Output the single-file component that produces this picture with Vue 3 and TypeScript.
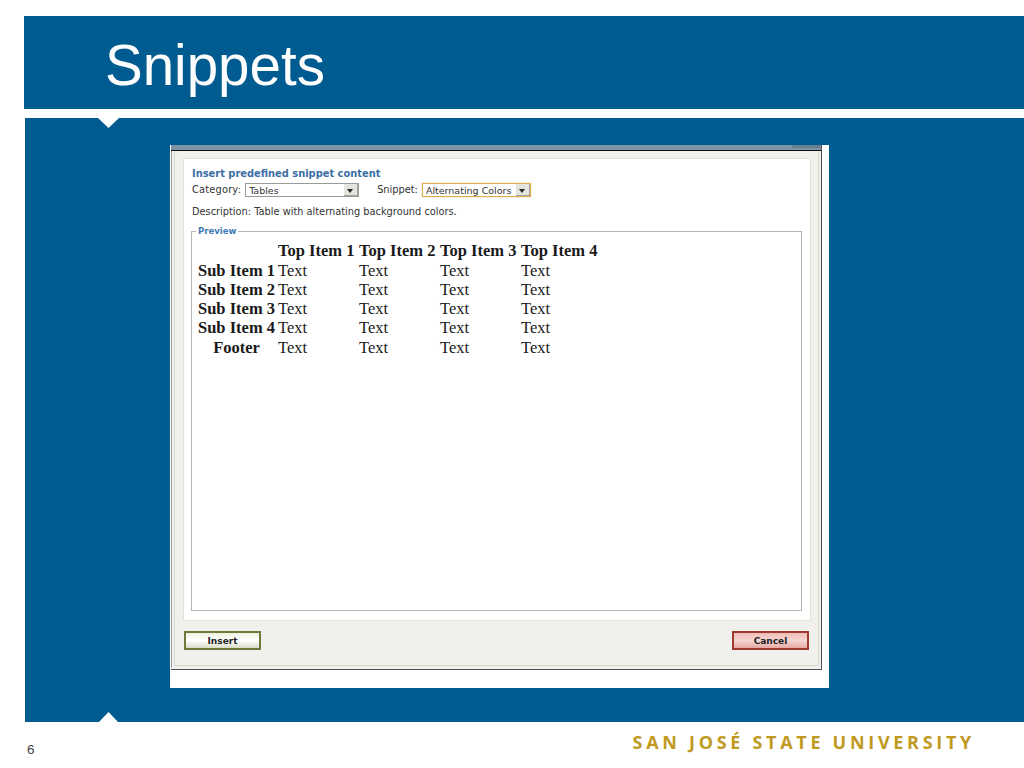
<script setup lang="ts">
const heads: string[] = ['Top Item 1', 'Top Item 2', 'Top Item 3', 'Top Item 4']
const rows: { label: string; foot?: boolean }[] = [
  { label: 'Sub Item 1' },
  { label: 'Sub Item 2' },
  { label: 'Sub Item 3' },
  { label: 'Sub Item 4' },
  { label: 'Footer', foot: true },
]
</script>

<template>
  <div class="page">
    <header class="title-bar"><h1>Snippets</h1></header>
    <main class="content">
      <span class="notch notch-top"></span>
      <div class="shot">
        <div class="dialog">
          <div class="dialog-strip"><span class="strip-tab"></span></div>
          <div class="dialog-body">
            <div class="panel">
              <div class="heading">Insert predefined snippet content</div>
              <div class="fields">
                <span class="lbl">Category:</span>
                <div class="select cat"><span>Tables</span><i class="arrow"></i></div>
                <span class="lbl snip">Snippet:</span>
                <div class="select focus"><span>Alternating Colors</span><i class="arrow"></i></div>
              </div>
              <div class="desc">Description: Table with alternating background colors.</div>
              <div class="preview">
                <span class="legend">Preview</span>
                <div class="table">
                  <div class="row head">
                    <div class="side"></div>
                    <div v-for="h in heads" :key="h" class="cell">{{ h }}</div>
                  </div>
                  <div v-for="r in rows" :key="r.label" class="row" :class="{ foot: r.foot }">
                    <div class="side">{{ r.label }}</div>
                    <div v-for="h in heads" :key="h" class="cell">Text</div>
                  </div>
                </div>
              </div>
            </div>
            <div class="actions">
              <button class="btn ok">Insert</button>
              <button class="btn cancel">Cancel</button>
            </div>
          </div>
        </div>
      </div>
      <span class="notch notch-bottom"></span>
    </main>
    <footer class="foot-bar">
      <span class="num">6</span>
      <span class="brand">SAN JOSÉ STATE UNIVERSITY</span>
    </footer>
  </div>
</template>

<style>
html, body { margin: 0; background: #fff; }
</style>

<style scoped>
.page {
  width: 1024px;
  height: 768px;
  overflow: hidden;
  background: #fff;
  padding-top: 16px;
  box-sizing: border-box;
  font-family: "Liberation Sans", Arial, sans-serif;
}
.title-bar {
  height: 93px;
  margin-left: 24px;
  background: #005c90;
  padding-left: 81px;
  box-sizing: border-box;
}
.title-bar h1 {
  margin: 0;
  padding-top: 18px;
  font-size: 56.5px;
  line-height: 64px;
  font-weight: 400;
  color: #fff;
}
.content {
  position: relative;
  height: 604px;
  margin: 9px 0 0 25px;
  background: #005c90;
  padding: 27px 0 0 145px;
  box-sizing: border-box;
}
.notch { position: absolute; background: #fff; }
.notch-top { top: 0; left: 73px; width: 21px; height: 10px; clip-path: polygon(0 0, 100% 0, 50% 100%); }
.notch-bottom { bottom: 0; left: 74px; width: 19px; height: 10px; clip-path: polygon(50% 0, 100% 100%, 0 100%); }
.shot {
  width: 659px;
  height: 543px;
  background: #fff;
  padding-left: 1px;
  box-sizing: border-box;
}
.dialog {
  width: 651px;
  height: 525px;
  box-sizing: border-box;
  border-right: 1px solid #4a4f52;
  border-bottom: 1px solid #4a4f52;
  background: #f1f0ec;
  display: flex;
  flex-direction: column;
}
.dialog-strip {
  position: relative;
  height: 6px;
  box-sizing: border-box;
  background: #7d93a6;
  border-bottom: 1px solid #111;
  flex: none;
}
.strip-tab {
  position: absolute;
  right: 1px;
  top: 0;
  width: 28px;
  height: 3px;
  background: #6a7f90;
}
.dialog-body {
  flex: 1;
  padding: 7px 10px 0 11px;
  border-left: 1px solid #999;
  border-bottom: 3px solid #f1f0ec;
  box-shadow: inset 2px 0 0 #f1f0ec, inset 3px 0 0 #dcdbd6, inset -2px 0 0 #f1f0ec, inset -3px 0 0 #dcdbd6, inset 0 -1px 0 #d5d4cf;
  display: flex;
  flex-direction: column;
}
.panel {
  height: 463px;
  flex: none;
  box-sizing: border-box;
  background: #fff;
  border: 1px solid #e2e1dc;
  padding: 8px 8px 9px 8px;
  display: flex;
  flex-direction: column;
  font-family: "DejaVu Sans", Verdana, sans-serif;
  font-size: 9.8px;
  color: #333;
}
.heading {
  font-size: 9.9px;
  font-weight: 700;
  line-height: 14px;
  color: #3b6ea5;
}
.fields {
  display: flex;
  align-items: center;
  height: 14px;
  margin-top: 2px;
}
.lbl { line-height: 14px; letter-spacing: 0.2px; }
.snip { margin-left: 18px; letter-spacing: 0; }
.select {
  display: flex;
  align-items: center;
  justify-content: space-between;
  box-sizing: border-box;
  height: 14px;
  margin-left: 4px;
  padding: 0 0 0 3px;
  border: 1px solid #9a9a9a;
  font-size: 9.5px;
  background: #fff;
}
.cat { width: 114px; }
.focus { width: 109px; border-color: #e0b050; box-shadow: 0 0 1px #e0b050; }
.arrow {
  position: relative;
  width: 14px;
  height: 12px;
  background: #e4e3de;
  box-shadow: inset -1px -1px 0 #a5a49e;
  box-sizing: border-box;
}
.arrow::after {
  content: "";
  position: absolute;
  left: 3px;
  top: 5px;
  border: 3.5px solid transparent;
  border-top: 4px solid #222;
  border-bottom: 0;
}
.desc { margin-top: 8px; line-height: 14px; }
.preview {
  position: relative;
  flex: 1;
  margin: 12px 0 0 -1px;
  border: 1px solid #b5b5b5;
  padding: 9px 0 0 6px;
}
.legend {
  position: absolute;
  top: -6px;
  left: 4px;
  padding: 0 2px;
  background: #fff;
  font-size: 8.5px;
  font-weight: 700;
  line-height: 11px;
  color: #3b7ab5;
}
.table {
  font-family: "Liberation Serif", "Times New Roman", serif;
  font-size: 16.5px;
  color: #1a1a1a;
}
.row {
  display: grid;
  grid-template-columns: 80px 81px 81px 81px 81px;
  height: 19px;
  line-height: 19px;
}
.row.head { height: 20px; font-weight: 700; }
.row.foot { height: 20px; margin-top: 1px; }
.side { font-weight: 700; text-align: center; white-space: nowrap; padding-right: 3px; }
.cell { white-space: nowrap; }
.actions {
  display: flex;
  justify-content: space-between;
  padding: 10px 2px 0 1px;
}
.btn {
  width: 77px;
  height: 19px;
  padding: 0;
  font-family: "DejaVu Sans", Verdana, sans-serif;
  font-size: 9px;
  font-weight: 700;
  color: #222;
  box-sizing: border-box;
}
.ok {
  border: 2px solid #6d7a3a;
  background: linear-gradient(#eef1de, #fff 50%, #d9dcc8);
}
.cancel {
  border: 2px solid #9e3a30;
  background: linear-gradient(#f0bdb6, #f5d6d2 50%, #e6aaa3);
}
.foot-bar {
  position: relative;
  display: flex;
  align-items: center;
  justify-content: space-between;
  height: 46px;
  padding: 0 49px 0 27px;
}
.num { font-size: 13.5px; color: #444; padding-top: 9px; }
.brand {
  font-family: "Open Sans", "Liberation Sans", sans-serif;
  font-size: 18px;
  font-weight: 700;
  letter-spacing: 3.7px;
  color: #c09a1e;
  white-space: nowrap;
  margin-bottom: 7px;
}
</style>
